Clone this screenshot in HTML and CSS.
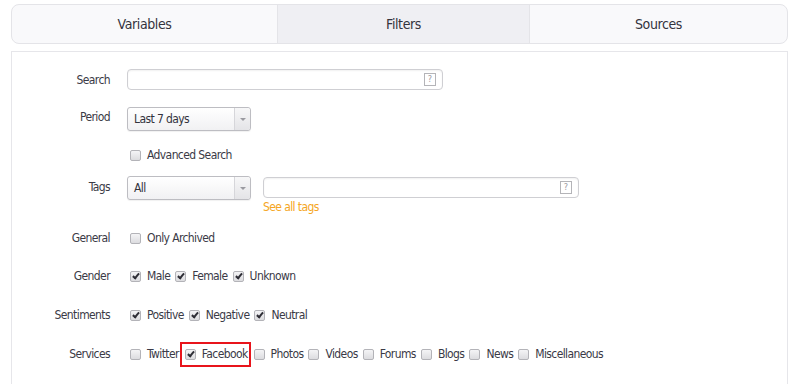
FILE: index.html
```html
<!DOCTYPE html>
<html>
<head>
  <title>Filters</title>
  <meta name="viewport" content="width=device-width, initial-scale=1.0">
  <link rel="stylesheet" href="styles.css">
</head>
<body>
  <div class="tabs">
    <div class="tab">Variables</div>
    <div class="tab active">Filters</div>
    <div class="tab">Sources</div>
  </div>

  <div class="panel">
    <div class="row row-search">
      <div class="label">Search</div>
      <div class="field">
        <div class="text-input wide"><span class="help">?</span></div>
      </div>
    </div>

    <div class="row row-period">
      <div class="label label-up">Period</div>
      <div class="field">
        <div class="select"><span class="select-text">Last 7 days</span><span class="select-arrow"></span></div>
      </div>
    </div>

    <div class="row row-adv">
      <div class="label"></div>
      <div class="field">
        <label class="check"><span class="box"></span>Advanced Search</label>
      </div>
    </div>

    <div class="row row-tags">
      <div class="label">Tags</div>
      <div class="field field-tags">
        <div class="select"><span class="select-text">All</span><span class="select-arrow"></span></div>
        <div class="tag-col">
          <div class="text-input wide tag-input"><span class="help">?</span></div>
          <a class="see-all">See all tags</a>
        </div>
      </div>
    </div>

    <div class="row row-general">
      <div class="label">General</div>
      <div class="field">
        <label class="check"><span class="box"></span>Only Archived</label>
      </div>
    </div>

    <div class="row row-gender">
      <div class="label">Gender</div>
      <div class="field">
        <label class="check"><span class="box on"></span>Male</label>
        <label class="check"><span class="box on"></span>Female</label>
        <label class="check"><span class="box on"></span>Unknown</label>
      </div>
    </div>

    <div class="row row-sent">
      <div class="label">Sentiments</div>
      <div class="field">
        <label class="check"><span class="box on"></span>Positive</label>
        <label class="check"><span class="box on"></span>Negative</label>
        <label class="check"><span class="box on"></span>Neutral</label>
      </div>
    </div>

    <div class="row row-services">
      <div class="label">Services</div>
      <div class="field">
        <label class="check"><span class="box"></span>Twitter</label>
        <label class="check marked"><span class="box on"></span>Facebook</label>
        <label class="check"><span class="box"></span>Photos</label>
        <label class="check"><span class="box"></span>Videos</label>
        <label class="check"><span class="box"></span>Forums</label>
        <label class="check"><span class="box"></span>Blogs</label>
        <label class="check"><span class="box"></span>News</label>
        <label class="check"><span class="box"></span>Miscellaneous</label>
      </div>
    </div>
  </div>
</body>
</html>
```

FILE: styles.css
```css
body {
  font-family: 'DejaVu Sans Condensed', 'Liberation Sans', sans-serif;
  background: #fff;
  margin: 0;
  padding: 4px 12px 0 11px;
  color: #3a3a46;
  font-size: 12px;
  letter-spacing: -0.6px;
}

.tabs {
  display: flex;
  height: 38px;
  border: 1px solid #e4e4e8;
  border-radius: 8px;
  background: #f9f9fb;
  overflow: hidden;
}

.tab {
  flex: 1;
  display: flex;
  align-items: center;
  justify-content: center;
  font-size: 14px;
  letter-spacing: -0.4px;
  color: #33333d;
}

.tab:nth-child(1) { flex: 0 0 265px; }
.tab:nth-child(2) { flex: 0 0 251px; }

.tab.active {
  background: #efeff3;
  border-left: 1px solid #e4e4e8;
  border-right: 1px solid #e4e4e8;
}

.panel {
  margin-top: 7px;
  border: 1px solid #e6e6ea;
  border-bottom: none;
  height: 340px;
  padding-top: 17px;
}

.row {
  display: grid;
  grid-template-columns: 98px 1fr;
  column-gap: 17px;
  align-items: center;
}

.label {
  text-align: right;
}

.label-up {
  margin-top: -5px;
}

.field {
  display: flex;
  align-items: center;
}

.row-search { height: 21px; }
.row-period { height: 24px; margin-top: 17px; }
.row-adv { height: 18px; margin-top: 15px; }
.row-tags { margin-top: 12px; align-items: start; }
.row-tags .label { margin-top: 4px; }
.row-general { height: 20px; margin-top: 14px; }
.row-gender { height: 20px; margin-top: 18px; }
.row-sent { height: 20px; margin-top: 19px; }
.row-services { height: 26px; margin-top: 16px; }

.text-input {
  height: 19px;
  border: 1px solid #cfcfd3;
  border-radius: 4px;
  background: #fff;
  box-shadow: inset 0 1px 2px rgba(0,0,0,0.06);
  display: flex;
  align-items: center;
  justify-content: flex-end;
}

.wide { width: 314px; }

.help {
  width: 10px;
  height: 11px;
  border: 1px solid #b4b4b8;
  font-size: 9px;
  line-height: 11px;
  text-align: center;
  color: #9a9aa0;
  margin-right: 6px;
  letter-spacing: 0;
}

.select {
  width: 122px;
  height: 22px;
  border: 1px solid #bdbdc2;
  border-radius: 3px;
  background: linear-gradient(#ffffff, #f1f1f3);
  display: flex;
  align-items: center;
  box-shadow: 0 1px 1px rgba(0,0,0,0.06);
}

.select-text {
  flex: 1;
  padding-left: 6px;
  color: #33333d;
}

.select-arrow {
  width: 15px;
  height: 100%;
  border-left: 1px solid #d6d6da;
  background: linear-gradient(#f7f7f8, #e4e4e7);
  border-radius: 0 3px 3px 0;
  position: relative;
}

.select-arrow::after {
  content: '';
  position: absolute;
  left: 5px;
  top: 10px;
  border-left: 3px solid transparent;
  border-right: 3px solid transparent;
  border-top: 3px solid #9a9aa0;
}

.field-tags {
  align-items: flex-start;
}

.tag-col {
  margin-left: 12px;
  margin-top: 1px;
  display: flex;
  flex-direction: column;
}

.see-all {
  color: #f5a623;
  margin-top: 2px;
  line-height: 14px;
}

.check {
  display: flex;
  align-items: center;
  margin-right: 5px;
}

.check:first-child {
  margin-left: 3px;
}

.box {
  width: 9px;
  height: 9px;
  border: 1px solid #b3b3b8;
  border-radius: 2px;
  background: linear-gradient(#f4f4f6, #dcdcdf);
  margin-right: 6px;
  position: relative;
}

.box.on::after {
  content: '';
  position: absolute;
  left: 3px;
  top: 0px;
  width: 2px;
  height: 5px;
  border-right: 2px solid #2e2e36;
  border-bottom: 2px solid #2e2e36;
  transform: rotate(40deg);
}

.marked {
  border: 2px solid #e8141b;
  padding: 0 1px 0 3px;
  margin-left: -4px;
  margin-right: 3px;
  height: 21px;
}
```
